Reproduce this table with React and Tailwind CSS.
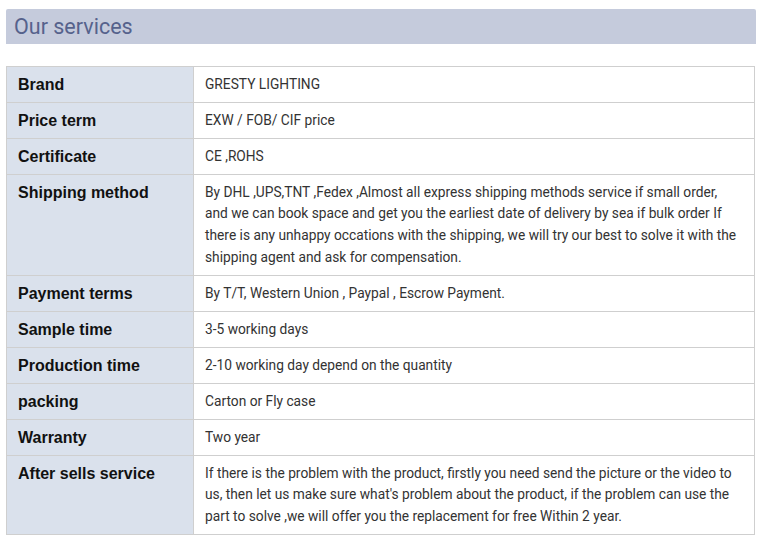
const rows = [
  { label: 'Brand', value: 'GRESTY LIGHTING' },
  { label: 'Price term', value: 'EXW / FOB/ CIF price' },
  { label: 'Certificate', value: 'CE ,ROHS' },
  {
    label: 'Shipping method',
    value:
      'By DHL ,UPS,TNT ,Fedex ,Almost all express shipping methods service if small order, and we can book space and get you the earliest date of delivery by sea if bulk order If there is any unhappy occations with the shipping, we will try our best to solve it with the shipping agent and ask for compensation.',
  },
  { label: 'Payment terms', value: 'By T/T, Western Union , Paypal , Escrow Payment.' },
  { label: 'Sample time', value: '3-5 working days' },
  { label: 'Production time', value: '2-10 working day depend on the quantity' },
  { label: 'packing', value: 'Carton or Fly case' },
  { label: 'Warranty', value: 'Two year' },
  {
    label: 'After sells service',
    value:
      "If there is the problem with the product, firstly you need send the picture or the video to us, then let us make sure what's problem about the product, if the problem can use the part to solve ,we will offer you the replacement for free Within 2 year.",
  },
];

const App = () => {
  return (
    <main className="min-h-[550px] w-[778px] bg-white pt-[9px]">
      <div className="ml-[6px] flex h-[35px] w-[750px] items-center rounded-t-[2px] bg-[#c5cbdc] pl-[8px]">
        <h2 className="font-['Roboto',sans-serif] text-[21.5px] leading-none text-[#56628c]">Our services</h2>
      </div>

      <table className="ml-[6px] mt-[22px] w-[749px] border-collapse">
        <tbody>
          {rows.map((row) => (
            <tr key={row.label}>
              <td className="w-[187px] border border-[#cfcfcf] bg-[#dae1ec] px-[11px] pt-[6.5px] pb-[6.83px] align-top font-['Liberation_Sans',Arial,sans-serif] text-[16px] font-bold leading-[21.67px] text-[#111]">
                {row.label}
              </td>
              <td className="border border-[#cfcfcf] px-[11px] pt-[6.5px] pb-[6.83px] align-top font-['Roboto',sans-serif] text-[13.75px] leading-[21.67px] text-[#333]">
                {row.value}
              </td>
            </tr>
          ))}
        </tbody>
      </table>
    </main>
  );
};

export default App;
